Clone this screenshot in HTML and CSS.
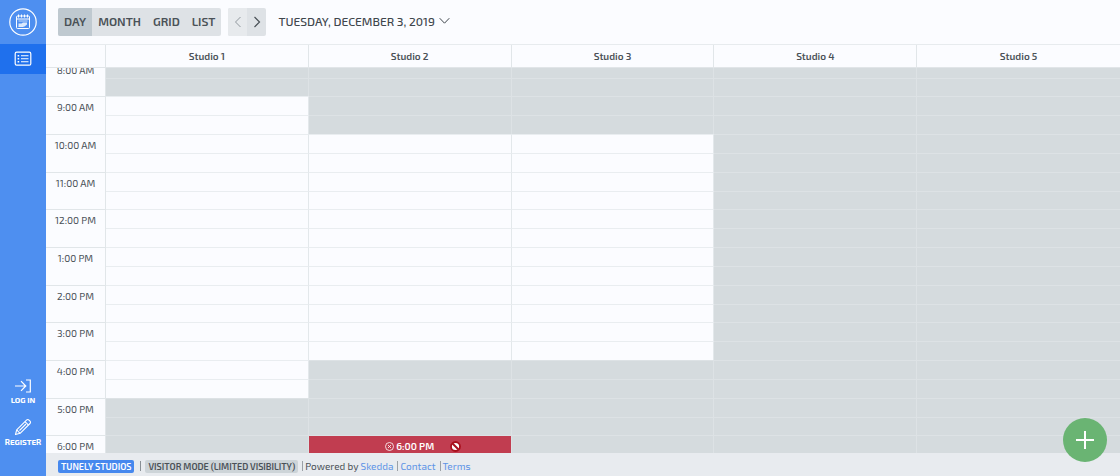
FILE: index.html
```html
<!DOCTYPE html>
<html lang="en">
<head>
    <meta charset="UTF-8">
    <meta name="viewport" content="width=device-width, initial-scale=1.0">
    <title>Tunely Studios</title>
    <link rel="stylesheet" href="styles.css">
</head>
<body>
    <nav class="sidebar">
        <a class="logo" href="#" aria-label="Home">
            <svg width="28" height="28" viewBox="0 0 28 28" fill="none" stroke="currentColor">
                <circle cx="14" cy="14" r="13.2" stroke-width="1.2"/>
                <rect x="7.5" y="8" width="13" height="12.5" rx="1"/>
                <path d="M7.5 11h13M9.5 6.5v3M12.5 6.5v3M15.5 6.5v3M18.5 6.5v3"/>
                <path d="M9.5 18.5v-3h3l1.5-1h4v2l-2.5 2z" fill="currentColor" stroke="none" opacity="0.8"/>
                <path d="M9.5 13h9M9.5 18.5h5" opacity="0.7"/>
            </svg>
        </a>
        <a class="side-item active" href="#" aria-label="Bookings">
            <svg width="18" height="16" viewBox="0 0 18 16" fill="none" stroke="currentColor">
                <rect x="1.2" y="1.2" width="15.6" height="13" rx="1.5" stroke-width="1.2"/>
                <path d="M7 4.7h7.5M7 7.7h7.5M7 10.7h7.5" stroke-width="1.1"/>
                <path d="M3.6 4.7h1.6M3.6 7.7h1.6M3.6 10.7h1.6" stroke-width="1.5"/>
            </svg>
        </a>
        <div class="account">
            <a href="#">
                <svg width="18" height="16" viewBox="0 0 18 16" fill="none" stroke="currentColor" stroke-width="1.2">
                    <path d="M1 8h10.5M7 3.2L11.8 8L7 12.8M12 2h4.3v12H12"/>
                </svg>
                <span>LOG IN</span>
            </a>
            <a href="#">
                <svg width="18" height="18" viewBox="0 0 18 18" fill="none" stroke="currentColor" stroke-width="1.1" stroke-linejoin="round">
                    <path d="M1.5 16.5l1.2-4.6L12.5 2.1c.8-.8 1.8-.7 2.5 0l1 1c.7.7.7 1.7 0 2.4L6.1 15.3z"/>
                    <path d="M11 3.6l3.5 3.5M2.7 11.9l3.4 3.4M5.5 12.5l6.5-6.5"/>
                </svg>
                <span>REGISTER</span>
            </a>
        </div>
    </nav>

    <div class="page">
        <header class="toolbar">
            <div class="btn-group">
                <button class="active" type="button">DAY</button>
                <button type="button">MONTH</button>
                <button type="button">GRID</button>
                <button type="button">LIST</button>
            </div>
            <div class="btn-group arrows">
                <button type="button" aria-label="Previous day" disabled>
                    <svg width="8" height="12" viewBox="0 0 8 12" fill="none" stroke="currentColor"><path d="M6.5 1L1.5 6l5 5"/></svg>
                </button>
                <button type="button" aria-label="Next day">
                    <svg width="8" height="12" viewBox="0 0 8 12" fill="none" stroke="currentColor" stroke-width="1.2"><path d="M1.5 1l5 5l-5 5"/></svg>
                </button>
            </div>
            <button class="date" type="button">
                TUESDAY, DECEMBER 3, 2019
                <svg width="11" height="8" viewBox="0 0 11 8" fill="none" stroke="currentColor"><path d="M.7 1.2l4.8 5l4.8-5"/></svg>
            </button>
        </header>

        <main class="calendar">
            <div class="spaces">
                <div></div>
                <div>Studio 1</div>
                <div>Studio 2</div>
                <div>Studio 3</div>
                <div>Studio 4</div>
                <div>Studio 5</div>
            </div>
            <div class="scroller">
                <table class="slots" aria-label="Bookings by studio">
                    <tbody id="slots"></tbody>
                </table>
            </div>
        </main>

        <footer class="footer">
            <span class="badge venue">TUNELY STUDIOS</span>
            <span class="badge mode">VISITOR MODE (LIMITED VISIBILITY)</span>
            <span class="item">Powered by <a href="#">Skedda</a></span>
            <span class="item"><a href="#">Contact</a></span>
            <span class="item"><a href="#">Terms</a></span>
        </footer>
    </div>

    <button class="add" type="button" aria-label="Add booking">
        <svg width="18" height="18" viewBox="0 0 18 18" stroke="currentColor" stroke-width="2"><path d="M9 0v18M0 9h18"/></svg>
    </button>

    <template id="booking">
        <div class="booking">
            <svg width="9" height="9" viewBox="0 0 9 9" fill="none" stroke="currentColor" stroke-width="0.8"><circle cx="4.5" cy="4.5" r="4"/><path d="M3 3l3 3M6 3l-3 3"/></svg>
            <span>6:00 PM</span>
            <svg class="blocked" width="11" height="11" viewBox="0 0 11 11"><circle cx="5.5" cy="5.5" r="4.5" fill="#fff" stroke="#a80f1c" stroke-width="1.8"/><path d="M2.5 2.5l6 6" stroke="#a80f1c" stroke-width="2"/></svg>
        </div>
    </template>
    <script src="script.js"></script>
</body>
</html>
```
FILE: styles.css
```css
* {
    box-sizing: border-box;
}
body {
    display: flex;
    height: 100vh;
    margin: 0;
    overflow: hidden;
    font-family: "Exo 2", Roboto, sans-serif;
    font-size: 10px;
    color: #4a5157;
    background-color: #fbfcff;
}
button {
    border: 0;
    padding: 0;
    font: inherit;
    color: inherit;
    background: none;
    cursor: pointer;
}
a {
    color: #5e94e6;
    text-decoration: none;
}
svg {
    flex: none;
}

/* Sidebar */
.sidebar {
    display: flex;
    flex-direction: column;
    flex: none;
    width: 46px;
    background-color: #4e8ff0;
}
.sidebar a {
    display: flex;
    flex-direction: column;
    align-items: center;
    justify-content: center;
    color: #fff;
}
.sidebar .logo {
    height: 44px;
}
.side-item {
    height: 30px;
}
.side-item.active {
    background-color: #1f70ed;
}
.account {
    display: flex;
    flex-direction: column;
    gap: 12px;
    margin-top: auto;
    padding-bottom: 28px;
    font-size: 8px;
    font-weight: 700;
    line-height: 12px;
}

/* Toolbar */
.toolbar {
    display: flex;
    align-items: center;
    gap: 7px;
    flex: none;
    height: 44px;
    padding: 0 12px;
    font-size: 12px;
    font-weight: 600;
    line-height: 14px;
}
.btn-group {
    display: flex;
    height: 28px;
    border-radius: 2px;
    overflow: hidden;
    background-color: #dee2e6;
}
.btn-group button {
    padding: 0 6px 2px;
}
.btn-group .active {
    background-color: #bfc9d0;
}
.arrows button {
    display: flex;
    align-items: center;
    justify-content: center;
    width: 19px;
    padding: 0;
}
.arrows button:disabled {
    color: #90979d;
    background-color: #e7eaed;
}
.date {
    display: flex;
    align-items: center;
    gap: 4px;
    margin-left: 5px;
    padding-bottom: 2px;
    font-weight: 500;
    color: #3f464c;
}

/* Calendar */
.page {
    display: flex;
    flex-direction: column;
    flex: 1;
    min-width: 0;
}
.calendar {
    display: flex;
    flex-direction: column;
    flex: 1;
    min-height: 0;
}
.spaces {
    display: grid;
    grid-template-columns: 60px repeat(5, 1fr);
    flex: none;
    height: 24px;
    border-top: 1px solid #e7ebee;
    border-bottom: 1px solid #e1e5e8;
    font-size: 10px;
    font-weight: 600;
    line-height: 22px;
    text-align: center;
}
.spaces div {
    border-right: 1px solid #e1e6e9;
}
.spaces div:last-child {
    border-right: 0;
}
.scroller {
    flex: 1;
    min-height: 0;
    overflow: hidden;
}
/* The day is scrolled a little past 8:00 AM */
.slots {
    width: 100%;
    margin-top: -9px;
    border-collapse: separate;
    border-spacing: 0;
    table-layout: fixed;
}
.slots th {
    width: 60px;
    padding: 4px 0 0;
    border-top: 1px solid #e1e6e9;
    border-right: 1px solid #e1e6e9;
    font-weight: 400;
    line-height: 12px;
    text-align: center;
    vertical-align: top;
}
.slots tr {
    height: 19px;
}
.slots tr:nth-child(6n + 2) {
    height: 18px;
}
.slots td {
    padding: 0;
    border-top: 1px solid #e9edf0;
    border-right: 1px solid #e3e8eb;
    vertical-align: top;
}
.slots td:last-child {
    border-right: 0;
}
.slots .closed {
    border-color: #dde2e5;
    background-color: #d5dbde;
}
.booking {
    display: flex;
    align-items: center;
    justify-content: center;
    gap: 2px;
    height: 18px;
    padding: 2px 0 0 27px;
    font-weight: 600;
    color: #fff;
    background-color: #c13d50;
}
.blocked {
    margin-left: 14px;
}

/* Footer */
.footer {
    display: flex;
    align-items: center;
    flex: none;
    height: 23px;
    padding: 3px 12px 0;
    line-height: 12px;
    background-color: #e8ebef;
}
.badge {
    padding: 0 3px;
    border-radius: 2px;
    font-size: 9px;
    font-weight: 600;
    line-height: 13px;
}
.venue {
    color: #fff;
    background-color: #4688ee;
}
.mode {
    position: relative;
    margin-left: 11px;
    background-color: #cdd4d8;
}
.mode::before {
    content: "";
    position: absolute;
    left: -5px;
    top: 1px;
    height: 10px;
    border-left: 1px solid #888f95;
}
.item {
    margin-left: 4px;
    padding-left: 2px;
    border-left: 1px solid #9ba1a6;
    line-height: 10px;
}

/* Floating add button */
.add {
    position: fixed;
    right: 13px;
    bottom: 14px;
    display: flex;
    align-items: center;
    justify-content: center;
    width: 44px;
    height: 44px;
    border-radius: 50%;
    color: #fff;
    background-color: #6ab473;
}
```
FILE: script.js
```javascript
// Opening hours of each studio, null when closed all day
const studios = [
    { open: 9, close: 17 },
    { open: 10, close: 16 },
    { open: 10, close: 16 },
    null,
    null
];

const slots = document.getElementById('slots');
const booking = document.getElementById('booking');

function hourLabel(hour) {
    return `${hour % 12 || 12}:00 ${hour < 12 ? 'AM' : 'PM'}`;
}

// Two half hour rows for each hour
for (let hour = 8; hour <= 18; hour++) {
    for (let half = 0; half < 2; half++) {
        const row = slots.insertRow();

        if (half === 0) {
            const label = document.createElement('th');
            label.scope = 'row';
            label.rowSpan = 2;
            label.textContent = hourLabel(hour);
            row.appendChild(label);
        }

        studios.forEach((studio, index) => {
            const cell = row.insertCell();
            if (!studio || hour < studio.open || hour >= studio.close) {
                cell.className = 'closed';
            }
            if (index === 1 && hour === 18 && half === 0) {
                cell.appendChild(booking.content.cloneNode(true));
            }
        });
    }
}
```
